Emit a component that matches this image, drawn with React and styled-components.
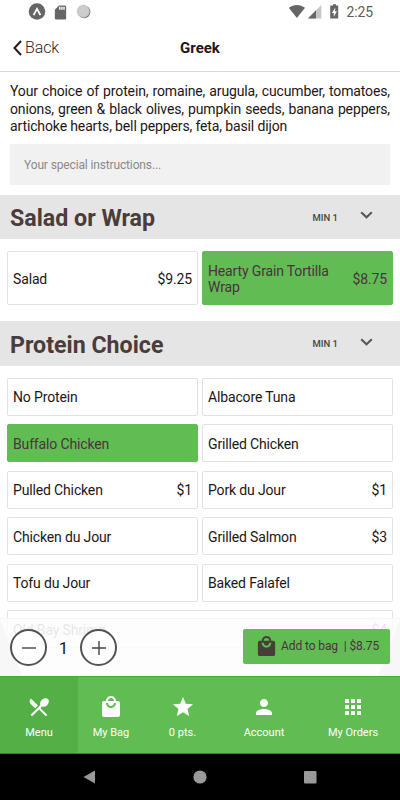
import React from 'react';
import styled, { createGlobalStyle, css } from 'styled-components';
import {
  MdRestaurantMenu,
  MdLocalMall,
  MdStar,
  MdPerson,
  MdApps,
  MdSdCard,
} from 'react-icons/md';

const green = '#61bd53';
const dark = '#4a3c3a';

const GlobalStyle = createGlobalStyle`
  * {
    box-sizing: border-box;
  }

  body {
    margin: 0;
    font-family: Roboto, 'Liberation Sans', sans-serif;
  }
`;

const Screen = styled.div`
  width: 400px;
  height: 800px;
  display: flex;
  flex-direction: column;
  background: #fff;
  color: #1c1616;
  overflow: hidden;
`;

const StatusBar = styled.div`
  height: 24px;
  flex: none;
  display: flex;
  justify-content: space-between;
  padding: 0 27px 0 28px;
  color: #666;
`;

const StatusGroup = styled.div`
  display: flex;
  align-items: center;

  svg {
    display: block;
  }
`;

const Clock = styled.span`
  margin-left: 6px;
  font-size: 14px;
  line-height: 24px;
  letter-spacing: -0.1px;
  color: #5c5c5c;
`;

const NavBar = styled.header`
  height: 48px;
  flex: none;
  display: grid;
  grid-template-columns: 1fr auto 1fr;
  align-items: center;
  border-bottom: 1px solid #d8d8d8;
`;

const Back = styled.div`
  display: flex;
  align-items: center;
  padding-left: 13px;
  gap: 3px;
  font-size: 16px;
  font-weight: 300;
  letter-spacing: -0.1px;
  color: #2f2424;
`;

const Title = styled.h1`
  margin: 0;
  font-size: 15px;
  font-weight: 700;
  color: #241515;
`;

const Content = styled.main`
  position: relative;
  height: 604px;
  flex: none;
  overflow: hidden;
`;

const Description = styled.p`
  margin: 10px 0 8px;
  padding: 1px 10px 0;
  font-size: 14px;
  line-height: 17.6px;
  letter-spacing: -0.13px;
  text-align: justify;
`;

const Instructions = styled.div`
  height: 41px;
  margin: 0 10px;
  padding-left: 14px;
  line-height: 42px;
  font-size: 12px;
  letter-spacing: -0.14px;
  background: #f1f1f1;
  color: #8d8888;
`;

const SectionHeader = styled.div`
  height: 44.5px;
  margin-top: ${(props) => props.$top}px;
  padding: 0 27px 0 10px;
  display: flex;
  align-items: center;
  background: #e5e5e5;
`;

const SectionTitle = styled.h2`
  flex: 1;
  margin: 0;
  padding-top: 2px;
  font-size: 23.2px;
  line-height: 28px;
  font-weight: 700;
  color: ${dark};
`;

const Min = styled.span`
  margin-right: 22px;
  font-size: 9.5px;
  font-weight: 500;
  color: #4b4444;
`;

const Options = styled.div`
  display: grid;
  grid-template-columns: 191px 191px;
  gap: 8.5px 4px;
  padding: 12px 7px 0;
`;

const Option = styled.div`
  height: ${(props) => (props.$tall ? 54 : 38)}px;
  padding: 1px 5px 0;
  display: flex;
  align-items: center;
  justify-content: space-between;
  border: 1px solid #e2e2e2;
  border-radius: 2px;
  font-size: 14px;
  line-height: 16px;
  letter-spacing: -0.15px;

  ${(props) => props.$wide && css`
    grid-column: span 2;
  `}

  ${(props) => props.$selected && css`
    background: ${green};
    border-color: ${green};
    color: #4d3042;
  `}
`;

const OrderBar = styled.div`
  position: absolute;
  left: 0;
  right: 0;
  bottom: 0;
  height: 58px;
  padding: 0 10px;
  display: flex;
  align-items: center;
  background:
    linear-gradient(to top right, #f7f7f7 50%, transparent 50%) left bottom / 22px 56px no-repeat,
    linear-gradient(to top left, #f7f7f7 50%, transparent 50%) right bottom / 22px 56px no-repeat,
    rgba(253, 253, 253, 0.9);
  border-top: 1px solid #f5f5f5;
`;

const RoundButton = styled.button`
  width: 37px;
  height: 37px;
  padding: 0;
  display: flex;
  align-items: center;
  justify-content: center;
  border: 2px solid #575252;
  border-radius: 50%;
  background: #fff;
`;

const Quantity = styled.span`
  width: 33px;
  text-align: center;
  font-size: 17px;
`;

const AddButton = styled.button`
  height: 35px;
  width: 147px;
  margin: -3px 0 0 auto;
  padding: 0 0 0 12px;
  display: flex;
  align-items: center;
  border: 0;
  border-radius: 2px;
  background: ${green};
  color: #4d3042;
  font-family: inherit;
  font-size: 12px;
  letter-spacing: -0.1px;
  white-space: pre;

  svg {
    margin-right: 3px;
    color: ${dark};
  }
`;

const TabBar = styled.nav`
  height: 78px;
  flex: none;
  display: flex;
  background: ${green};
  border-top: 1px solid #3fb028;
  border-bottom: 1px solid #3d7f33;
`;

const Tab = styled.div`
  width: ${(props) => props.$width}px;
  padding-top: 18px;
  display: flex;
  flex-direction: column;
  align-items: center;
  gap: 7px;
  font-size: 11px;
  line-height: 14px;
  color: #fff;
  background: ${(props) => (props.$active ? '#53af46' : 'transparent')};
  border-radius: 0 0 2px 2px;
`;

const SystemBar = styled.div`
  flex: 1;
  display: flex;
  justify-content: space-between;
  align-items: center;
  padding: 0 83px;
  background: #000;
`;

const Chevron = () => (
  <svg width='13' height='8' viewBox='0 0 13 8' style={{ marginTop: -4 }}>
    <path d='M1.2 1.2L6.5 6.3L11.8 1.2' fill='none' stroke='#555' strokeWidth='2' />
  </svg>
);

const proteins = [
  { name: 'No Protein' },
  { name: 'Albacore Tuna' },
  { name: 'Buffalo Chicken', selected: true },
  { name: 'Grilled Chicken' },
  { name: 'Pulled Chicken', price: '$1' },
  { name: 'Pork du Jour', price: '$1' },
  { name: 'Chicken du Jour' },
  { name: 'Grilled Salmon', price: '$3' },
  { name: 'Tofu du Jour' },
  { name: 'Baked Falafel' },
  { name: 'Old Bay Shrimp', price: '$4', wide: true },
];

const tabs = [
  { label: 'Menu', icon: MdRestaurantMenu, width: 78, active: true },
  { label: 'My Bag', icon: MdLocalMall, width: 66 },
  { label: '0 pts.', icon: MdStar, width: 77 },
  { label: 'Account', icon: MdPerson, width: 86 },
  { label: 'My Orders', icon: MdApps, width: 92 },
];

const App = () => (
  <Screen>
    <GlobalStyle />
    <StatusBar>
      <StatusGroup>
        <svg width='18' height='24' viewBox='0 0 18 24'>
          <circle cx='9' cy='11.5' r='8.3' fill='#666' />
          <path d='M5.6 15.2L9 8.8L12.4 15.2' fill='none' stroke='#fff' strokeWidth='1.8' />
        </svg>
        <MdSdCard size={17} style={{ marginLeft: 6 }} />
        <svg width='16' height='24' viewBox='0 0 16 24' style={{ marginLeft: 7 }}>
          <circle cx='8.2' cy='12' r='6.2' fill='#777' />
          <circle cx='7.3' cy='11.3' r='6.2' fill='#ccc' stroke='#aaa' strokeWidth='0.8' strokeDasharray='1 1' />
        </svg>
      </StatusGroup>
      <StatusGroup>
        <svg width='52' height='24' viewBox='0 0 52 24'>
          <path d='M0.8 7.8C5.5 3.9 12.3 3.9 17 7.8L8.9 18Z' fill='#666' />
          <path d='M33.3 5V18.5H20Z' fill='#c6c6c6' />
          <path d='M28 10.3V18.5H20Z' fill='#666' />
          <path d='M45 4.2H48V5.6H50.2V18.6H42.2V5.6H45Z' fill='#666' />
          <path d='M47.4 7.5L43.8 12.9H45.8V16.7L48.9 11.2H46.9Z' fill='#fff' />
        </svg>
        <Clock>2:25</Clock>
      </StatusGroup>
    </StatusBar>
    <NavBar>
      <Back>
        <svg width='9' height='16' viewBox='0 0 9 16'>
          <path d='M8 1L1.5 8L8 15' fill='none' stroke='#2a1a1a' strokeWidth='2' />
        </svg>
        Back
      </Back>
      <Title>Greek</Title>
    </NavBar>
    <Content>
      <Description>
        Your choice of protein, romaine, arugula, cucumber, tomatoes, onions,
        green &amp; black olives, pumpkin seeds, banana peppers, artichoke
        hearts, bell peppers, feta, basil dijon
      </Description>
      <Instructions>Your special instructions...</Instructions>
      <SectionHeader $top={10}>
        <SectionTitle>Salad or Wrap</SectionTitle>
        <Min>MIN 1</Min>
        <Chevron />
      </SectionHeader>
      <Options>
        <Option $tall>
          <span>Salad</span>
          <span>$9.25</span>
        </Option>
        <Option $tall $selected>
          <span>Hearty Grain Tortilla Wrap</span>
          <span>$8.75</span>
        </Option>
      </Options>
      <SectionHeader $top={16}>
        <SectionTitle>Protein Choice</SectionTitle>
        <Min>MIN 1</Min>
        <Chevron />
      </SectionHeader>
      <Options>
        {proteins.map((item) => (
          <Option key={item.name} $selected={item.selected} $wide={item.wide}>
            <span>{item.name}</span>
            {item.price && <span>{item.price}</span>}
          </Option>
        ))}
      </Options>
      <OrderBar>
        <RoundButton>
          <svg width='14' height='14' viewBox='0 0 14 14'>
            <path d='M0 7H14' stroke='#494444' strokeWidth='1.4' />
          </svg>
        </RoundButton>
        <Quantity>1</Quantity>
        <RoundButton>
          <svg width='14' height='14' viewBox='0 0 14 14'>
            <path d='M0 7H14M7 0V14' stroke='#494444' strokeWidth='1.4' />
          </svg>
        </RoundButton>
        <AddButton>
          <MdLocalMall size={23} />
          {'Add to bag  | $8.75'}
        </AddButton>
      </OrderBar>
    </Content>
    <TabBar>
      {tabs.map(({ label, icon: Icon, width, active }) => (
        <Tab key={label} $width={width} $active={active}>
          <Icon size={24} />
          {label}
        </Tab>
      ))}
    </TabBar>
    <SystemBar>
      <svg width='12' height='14' viewBox='0 0 12 14'>
        <path d='M12 0.5V13.5L0.5 7Z' fill='#999' />
      </svg>
      <svg width='14' height='14' viewBox='0 0 14 14'>
        <circle cx='7' cy='7' r='6.6' fill='#999' />
      </svg>
      <svg width='13' height='13' viewBox='0 0 13 13'>
        <rect width='12.5' height='12.5' rx='1' fill='#999' />
      </svg>
    </SystemBar>
  </Screen>
);

export default App;
